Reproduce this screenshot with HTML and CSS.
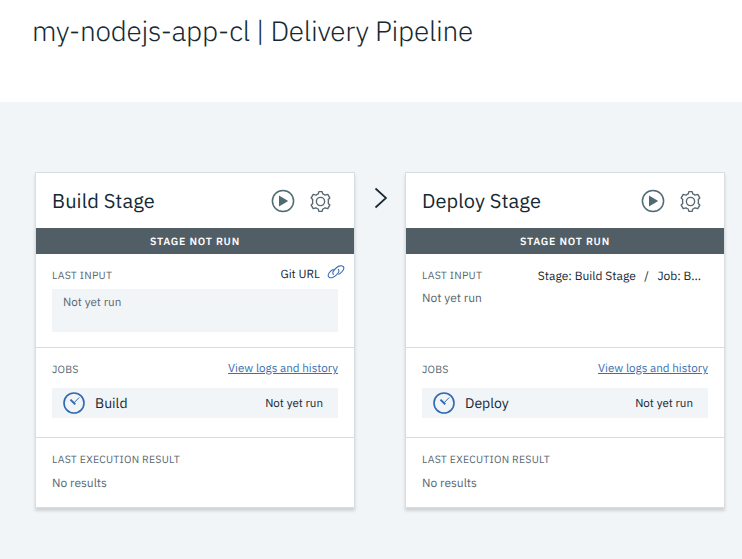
FILE: index.html
```
<!DOCTYPE html>
<html lang="en">
<head>
<meta charset="utf-8">
<title>my-nodejs-app-cl | Delivery Pipeline</title>
<link rel="stylesheet" href="styles.css">
</head>
<body>
<svg class="sprite" aria-hidden="true">
  <symbol id="play" viewBox="0 0 24 24"><circle cx="12" cy="12" r="10.6" fill="none" stroke="currentColor" stroke-width="1.5"/><path d="M8 6.500 17.200 12 8 17.500Z" fill="currentColor"/></symbol>
  <symbol id="gear" viewBox="0 0 24 24"><g fill="none" stroke="currentColor" stroke-width="1.45" stroke-linejoin="round"><circle cx="12" cy="12" r="4.3"/><path d="M10.300 1.700h3.400l.6 2.400q1.400.4 2.400 1.300l2.900-.8 2.100 3.700-1.600 1.600q.4 2.100 0 4.200l1.600 1.600-2.100 3.700-2.900-.8q-1 .9-2.400 1.300l-.6 2.400h-3.400l-.6-2.400q-1.400-.4-2.400-1.300l-2.900.8-2.100-3.700 1.600-1.600q-.4-2.100 0-4.200L2.300 8.300l2.100-3.700 2.900.8q1-.9 2.400-1.300Z"/></g></symbol>
  <symbol id="link" viewBox="0 0 18 14"><g fill="none" stroke="currentColor" stroke-width="1.1" stroke-linecap="round"><path d="M6.400 9.300C5 7.900 6.300 5.800 8.100 4L9.700 2.500C11.800.7 14.800.2 16.100 1.500c1.300 1.300.3 3.900-1.500 5.700-.9.900-1.900 1.600-2.900 2"/><path d="M11.300 4.300c1.400 1.400.2 3.600-1.600 5.300l-1.400 1.300c-2.100 1.900-5.100 2.500-6.400 1.200C.6 10.800 1.500 8.300 3.400 6.400c.9-.9 1.900-1.600 2.900-2"/></g></symbol>
  <symbol id="clock" viewBox="0 0 22 22"><circle cx="11" cy="11" r="10" fill="none" stroke="currentColor" stroke-width="1.6"/><path d="m7.500 7.600 4.700 4.800" fill="none" stroke="currentColor" stroke-width="2"/><path d="m11 10.800 5.200-5.300" fill="none" stroke="currentColor" stroke-width="1"/></symbol>
</svg>
<header class="page-header"><h1>my-nodejs-app-cl | Delivery Pipeline</h1></header>
<main class="pipeline">
  <article class="stage">
    <header class="stage-header"><h2>Build Stage</h2><svg class="icon play"><use href="#play"/></svg><svg class="icon gear"><use href="#gear"/></svg></header>
    <div class="status">STAGE NOT RUN</div>
    <section class="input">
      <div class="row"><h3>LAST INPUT</h3><span class="source git">Git URL<svg class="link"><use href="#link"/></svg></span></div>
      <div class="input-box">Not yet run</div>
    </section>
    <section class="jobs">
      <div class="row"><h3>JOBS</h3><a class="logs">View logs and history</a></div>
      <div class="job"><svg class="clock"><use href="#clock"/></svg><span class="job-name">Build</span><span class="job-state">Not yet run</span></div>
    </section>
    <section class="result"><h3>LAST EXECUTION RESULT</h3><p>No results</p></section>
  </article>
  <svg class="chevron" viewBox="0 0 14 22"><path d="m1.500 1.500 10.500 9.500L1.500 20.500" fill="none" stroke="currentColor" stroke-width="1.700"/></svg>
  <article class="stage">
    <header class="stage-header"><h2>Deploy Stage</h2><svg class="icon play"><use href="#play"/></svg><svg class="icon gear"><use href="#gear"/></svg></header>
    <div class="status">STAGE NOT RUN</div>
    <section class="input">
      <div class="row"><h3>LAST INPUT</h3><span class="source stage-source"><span>Stage: Build Stage</span><span>/</span><span>Job: B...</span></span></div>
      <p class="input-text">Not yet run</p>
    </section>
    <section class="jobs">
      <div class="row"><h3>JOBS</h3><a class="logs">View logs and history</a></div>
      <div class="job"><svg class="clock"><use href="#clock"/></svg><span class="job-name">Deploy</span><span class="job-state">Not yet run</span></div>
    </section>
    <section class="result"><h3>LAST EXECUTION RESULT</h3><p>No results</p></section>
  </article>
</main>
</body>
</html>
```
FILE: styles.css
```
* { box-sizing: border-box; }
body { margin: 0; width: 742px; height: 559px; overflow: hidden; background: #f1f5f8; color: #152934; font-family: "IBM Plex Sans", Roboto, sans-serif; text-rendering: geometricPrecision; }
h1, h2, h3, p { margin: 0; font-weight: 400; }
svg { display: block; flex: none; }
.sprite { display: none; }
.page-header { height: 102px; padding: 13px 32px 0; background: #fff; }
h1 { font-size: 28px; line-height: 36px; font-weight: 300; letter-spacing: -.25px; white-space: nowrap; }
.pipeline { display: flex; align-items: flex-start; padding: 70px 0 0 35px; }
.stage { flex: none; width: 320px; height: 336px; border: 1px solid #d8dde0; background: #fff; box-shadow: 0 3px 3px rgba(0, 0, 0, .14); }
.stage-header { display: flex; align-items: center; height: 55px; padding: 1px 22px 0 16px; }
h2 { flex: 1; font-size: 20px; line-height: 28px; letter-spacing: .08px; }
.icon { color: #4f6a70; }
.play { width: 24px; height: 24px; }
.gear { width: 23px; height: 23px; margin: 0 .5px 0 13.500px; color: #5a6872; }
.status { height: 26px; line-height: 26px; background: #525e66; color: #fff; text-align: center; font-size: 10.500px; font-weight: 600; letter-spacing: .8px; }
.input { height: 94px; padding: 12px 16px 0; border-bottom: 1px solid #d8dde0; }
.row { display: flex; justify-content: space-between; height: 18px; }
h3 { font-size: 10.500px; line-height: 19px; letter-spacing: .24px; color: #5a6872; white-space: nowrap; }
.source { display: flex; font-size: 12px; line-height: 17px; }
.git { margin-right: -7px; font-size: 11.800px; }
.link { width: 18px; height: 14px; margin: -1px 0 0 7px; color: #3d70b2; }
.stage-source { gap: 8.500px; line-height: 21px; margin-right: 7px; }
.input-box { height: 43px; margin-top: 5px; padding: 4px 11px; background: #f1f5f8; color: #5a6872; font-size: 11.700px; line-height: 19px; }
.input-text { margin-top: 5px; font-size: 12px; line-height: 19px; color: #5a6872; }
.jobs { height: 90px; padding: 11px 16px 0; border-bottom: 1px solid #d8dde0; }
.jobs .row { height: 29px; }
.jobs h3 { line-height: 21px; }
.logs { font-size: 11.600px; line-height: 19px; color: #3d70b2; text-decoration: underline; }
.job { display: flex; align-items: center; height: 30px; padding: 0 15px 0 11px; background: #f1f5f8; }
.clock { width: 22px; height: 22px; color: #3068b2; }
.job-name { flex: 1; margin-left: 10px; font-size: 14px; }
.job-state { font-size: 11.600px; }
.result { padding: 12px 16px 0; color: #5a6872; }
.result p { font-size: 12px; line-height: 19px; margin-top: 5px; }
.chevron { width: 14px; height: 22px; margin: 15px 17px 0 19px; color: #152934; }
```
